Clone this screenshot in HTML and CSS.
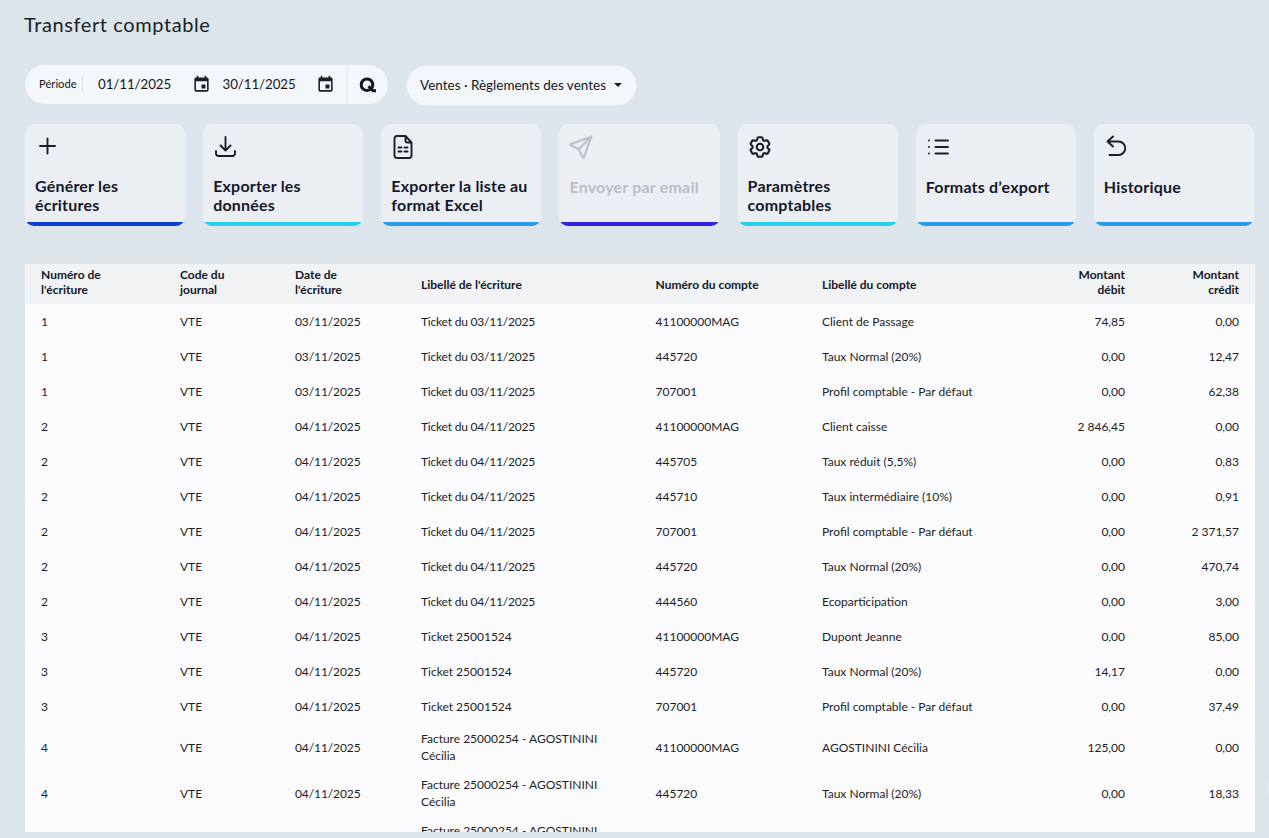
FILE: index.html
```html
<!DOCTYPE html>
<html lang="fr">
<head>
<meta charset="utf-8">
<title>Transfert comptable</title>
<link rel="stylesheet" href="styles.css">
</head>
<body>
<main class="page">
  <h1 class="title">Transfert comptable</h1>
  <div class="filters">
    <div class="period">
      <span class="period-label">Période</span>
      <span class="date"><span class="date-text">01/11/2025</span>
        <svg class="cal" viewBox="0 0 24 24"><path d="M17 12h-5v5h5v-5zM16 1v2H8V1H6v2H5c-1.11 0-1.99.9-1.99 2L3 19c0 1.1.89 2 2 2h14c1.1 0 2-.9 2-2V5c0-1.1-.9-2-2-2h-1V1h-2zm3 18H5V8h14v11z"/></svg></span>
      <span class="date"><span class="date-text">30/11/2025</span>
        <svg class="cal" viewBox="0 0 24 24"><path d="M17 12h-5v5h5v-5zM16 1v2H8V1H6v2H5c-1.11 0-1.99.9-1.99 2L3 19c0 1.1.89 2 2 2h14c1.1 0 2-.9 2-2V5c0-1.1-.9-2-2-2h-1V1h-2zm3 18H5V8h14v11z"/></svg></span>
      <span class="search"><svg viewBox="0 0 18 18"><circle cx="8" cy="8.700" r="5.800"/><path d="M9.500 10.200 14 14.800h3"/></svg></span>
    </div>
    <div class="select"><span>Ventes · Règlements des ventes</span><i class="caret"></i></div>
  </div>

  <div class="actions">
    <div class="card c-blue">
      <svg class="ico" viewBox="0 0 24 24"><path d="M12.500 3.500v15M5 11h15"/></svg>
      <div class="label">Générer les écritures</div>
    </div>
    <div class="card c-cyan">
      <svg class="ico" viewBox="0 0 24 24"><path d="M3 16v2.500A2.500 2.500 0 0 0 5.500 21h14a2.500 2.500 0 0 0 2.500-2.500V16M17.500 10.500l-5 5-5-5M12.500 15.500V2"/></svg>
      <div class="label">Exporter les données</div>
    </div>
    <div class="card c-sky">
      <svg class="ico" viewBox="0 0 24 24"><path d="M14.500 1.500v4a2 2 0 0 0 2 2h4M18 23H6a2.500 2.500 0 0 1-2.500-2.500v-17A2.500 2.500 0 0 1 6 1h8.500l6 6.500v13A2.500 2.500 0 0 1 18 23zM7.500 12.500h3M13.500 12.500h3M7.500 16.500h3M13.500 16.500h3"/></svg>
      <div class="label">Exporter la liste au format Excel</div>
    </div>
    <div class="card c-indigo disabled">
      <svg class="ico" viewBox="1.500 1.500 21 21"><path d="M10 14 21 3M21 3l-6.500 18a.55.55 0 0 1-1 0l-3.500-7-7-3.500a.55.55 0 0 1 0-1L21 3"/></svg>
      <div class="label single">Envoyer par email</div>
    </div>
    <div class="card c-cyan">
      <svg class="ico" viewBox="1 1 22 22"><path d="M9.594 3.94c.09-.542.56-.94 1.11-.94h2.593c.55 0 1.02.398 1.11.94l.213 1.281c.063.374.313.686.645.87.074.04.147.083.22.127.325.196.72.257 1.075.124l1.217-.456a1.125 1.125 0 0 1 1.37.49l1.296 2.247a1.125 1.125 0 0 1-.26 1.431l-1.003.827c-.293.241-.438.613-.43.992a7.723 7.723 0 0 1 0 .255c-.008.378.137.75.43.991l1.004.827c.424.35.534.955.26 1.43l-1.298 2.247a1.125 1.125 0 0 1-1.369.491l-1.217-.456c-.355-.133-.75-.072-1.076.124a6.47 6.47 0 0 1-.22.128c-.331.183-.581.495-.644.869l-.213 1.281c-.09.543-.56.94-1.11.94h-2.594c-.55 0-1.019-.398-1.11-.94l-.213-1.281c-.062-.374-.312-.686-.644-.87a6.52 6.52 0 0 1-.22-.127c-.325-.196-.72-.257-1.076-.124l-1.217.456a1.125 1.125 0 0 1-1.369-.49l-1.297-2.247a1.125 1.125 0 0 1 .26-1.431l1.004-.827c.292-.24.437-.613.43-.991a6.932 6.932 0 0 1 0-.255c.007-.38-.138-.751-.43-.992l-1.004-.827a1.125 1.125 0 0 1-.26-1.43l1.297-2.247a1.125 1.125 0 0 1 1.37-.491l1.216.456c.356.133.751.072 1.076-.124.072-.044.146-.086.22-.128.332-.183.582-.495.644-.869l.214-1.28Z"/><path d="M15 12a3 3 0 1 1-6 0 3 3 0 0 1 6 0Z"/></svg>
      <div class="label">Paramètres comptables</div>
    </div>
    <div class="card c-sky">
      <svg class="ico" viewBox="0 0 24 24"><path d="M9.500 5.500h12.500M9.500 12h12.500M9.500 18.500h12.500M3 5.500h.01M3 12h.01M3 18.500h.01"/></svg>
      <div class="label single">Formats d’export</div>
    </div>
    <div class="card c-sky">
      <svg class="ico" viewBox="0 0 24 24"><path d="M9 1.500 3.500 6.500 9 11.500M3.500 6.500h11a6.750 6.750 0 0 1 0 13.500H5.500"/></svg>
      <div class="label single">Historique</div>
    </div>
  </div>

  <div class="table-wrap">
    <table class="grid">
      <colgroup>
        <col class="w1"><col class="w2"><col class="w3"><col class="w4"><col class="w5"><col class="w6"><col class="w7"><col class="w8">
      </colgroup>
      <thead>
        <tr>
          <th class="two">Numéro de<br>l'écriture</th><th class="two">Code du<br>journal</th><th class="two">Date de<br>l'écriture</th><th>Libellé de l'écriture</th><th>Numéro du compte</th><th>Libellé du compte</th><th class="num two">Montant<br>débit</th><th class="num two">Montant<br>crédit</th>
        </tr>
      </thead>
      <tbody>
        <tr><td>1</td><td>VTE</td><td class="dt">03/11/2025</td><td class="tk">Ticket du 03/11/2025</td><td>41100000MAG</td><td>Client de Passage</td><td class="num">74,85</td><td class="num">0,00</td></tr>
        <tr><td>1</td><td>VTE</td><td class="dt">03/11/2025</td><td class="tk">Ticket du 03/11/2025</td><td>445720</td><td>Taux Normal (20%)</td><td class="num">0,00</td><td class="num">12,47</td></tr>
        <tr><td>1</td><td>VTE</td><td class="dt">03/11/2025</td><td class="tk">Ticket du 03/11/2025</td><td>707001</td><td>Profil comptable - Par défaut</td><td class="num">0,00</td><td class="num">62,38</td></tr>
        <tr><td>2</td><td>VTE</td><td class="dt">04/11/2025</td><td class="tk">Ticket du 04/11/2025</td><td>41100000MAG</td><td>Client caisse</td><td class="num">2 846,45</td><td class="num">0,00</td></tr>
        <tr><td>2</td><td>VTE</td><td class="dt">04/11/2025</td><td class="tk">Ticket du 04/11/2025</td><td>445705</td><td>Taux réduit (5,5%)</td><td class="num">0,00</td><td class="num">0,83</td></tr>
        <tr><td>2</td><td>VTE</td><td class="dt">04/11/2025</td><td class="tk">Ticket du 04/11/2025</td><td>445710</td><td>Taux intermédiaire (10%)</td><td class="num">0,00</td><td class="num">0,91</td></tr>
        <tr><td>2</td><td>VTE</td><td class="dt">04/11/2025</td><td class="tk">Ticket du 04/11/2025</td><td>707001</td><td>Profil comptable - Par défaut</td><td class="num">0,00</td><td class="num">2 371,57</td></tr>
        <tr><td>2</td><td>VTE</td><td class="dt">04/11/2025</td><td class="tk">Ticket du 04/11/2025</td><td>445720</td><td>Taux Normal (20%)</td><td class="num">0,00</td><td class="num">470,74</td></tr>
        <tr><td>2</td><td>VTE</td><td class="dt">04/11/2025</td><td class="tk">Ticket du 04/11/2025</td><td>444560</td><td>Ecoparticipation</td><td class="num">0,00</td><td class="num">3,00</td></tr>
        <tr><td>3</td><td>VTE</td><td class="dt">04/11/2025</td><td>Ticket 25001524</td><td>41100000MAG</td><td>Dupont Jeanne</td><td class="num">0,00</td><td class="num">85,00</td></tr>
        <tr><td>3</td><td>VTE</td><td class="dt">04/11/2025</td><td>Ticket 25001524</td><td>445720</td><td>Taux Normal (20%)</td><td class="num">14,17</td><td class="num">0,00</td></tr>
        <tr><td>3</td><td>VTE</td><td class="dt">04/11/2025</td><td>Ticket 25001524</td><td>707001</td><td>Profil comptable - Par défaut</td><td class="num">0,00</td><td class="num">37,49</td></tr>
        <tr class="dbl"><td>4</td><td>VTE</td><td class="dt">04/11/2025</td><td class="wrap">Facture 25000254 - AGOSTININI Cécilia</td><td>41100000MAG</td><td>AGOSTININI Cécilia</td><td class="num">125,00</td><td class="num">0,00</td></tr>
        <tr class="dbl"><td>4</td><td>VTE</td><td class="dt">04/11/2025</td><td class="wrap">Facture 25000254 - AGOSTININI Cécilia</td><td>445720</td><td>Taux Normal (20%)</td><td class="num">0,00</td><td class="num">18,33</td></tr>
        <tr class="dbl"><td>4</td><td>VTE</td><td class="dt">04/11/2025</td><td class="wrap">Facture 25000254 - AGOSTININI Cécilia</td><td>707001</td><td>Profil comptable - Par défaut</td><td class="num">0,00</td><td class="num">106,67</td></tr>
      </tbody>
    </table>
  </div>
  <div class="peek"></div>
</main>
</body>
</html>
```
FILE: styles.css
```css
* { box-sizing: border-box; }
html, body { margin: 0; height: 100%; overflow: hidden; }
body { background: #dce4ec; color: #14171f; font-family: Lato, "Liberation Sans", sans-serif; }

.page { position: relative; height: 838px; display: flex; flex-direction: column; padding: 12px 15px 6px 25px; overflow: hidden; }

.title { margin: 0 0 0 -1px; font-size: 20px; font-weight: 400; line-height: 24px; letter-spacing: .6px; color: #1b1e26; }

.filters { display: flex; align-items: flex-start; gap: 18px; margin-top: 29px; }

.period { display: flex; align-items: center; width: 363px; height: 39px; padding: 0 0 1px 14px; background: #f3f6fa; border-radius: 20px; }
.period-label { font-size: 11.2px; line-height: 16px; padding-right: 5px; border-right: 1px solid #dfe3e8; width: 44px; }
.date { display: flex; align-items: center; justify-content: space-between; font-size: 13.33px; }
.date:nth-child(2) { width: 112.500px; margin-left: 15px; }
.date:nth-child(3) { width: 112.500px; margin-left: 12px; }
.date-text { letter-spacing: -.08px; }
.cal { width: 19px; height: 19px; fill: #1b1e26; }
.search { margin-left: auto; width: 41px; height: 39px; margin-bottom: -1px; border-left: 1px solid #e0e4e9; display: flex; align-items: center; justify-content: center; }
.search svg { width: 18px; height: 18px; fill: none; stroke: #14171f; stroke-width: 3; }

.select { display: flex; align-items: center; width: 231px; height: 41px; padding: 0 0 1px 13px; background: #f3f6fa; border: 1px solid #e6ebf0; border-radius: 21px; font-size: 13.500px; }
.caret { margin-left: 8px; width: 0; height: 0; border: 4px solid transparent; border-top-color: #1b1e26; border-bottom: 0; }

.actions { display: flex; gap: 18px; margin-top: 18px; }
.card { flex: 1 1 0; height: 102px; border-radius: 9px; padding: 11px 10px 0; background: linear-gradient(#ebeff4 98px, var(--bar) 98px); }
.c-blue { --bar: #0a3fd6; }
.c-cyan { --bar: #26d0e8; }
.c-sky { --bar: #2b9ae8; }
.c-indigo { --bar: #2f22e0; }
.ico { display: block; width: 24px; height: 24px; fill: none; stroke: #1a1d2b; stroke-width: 1.900; stroke-linecap: round; stroke-linejoin: round; }
.label { margin-top: 17px; font-size: 16px; font-weight: 700; line-height: 19px; letter-spacing: .2px; color: #14172a; }
.single { padding-top: 1px; }
.disabled .ico { stroke: #bcc0ca; }
.disabled .label { color: #b9bdc7; }

.table-wrap { flex: 1; min-height: 0; overflow: hidden; margin: 38px -1px 0 0; background: #fbfbfe; }
.grid { width: 1230px; table-layout: fixed; border-collapse: collapse; font-size: 12px; line-height: 17.5px; }
.w1 { width: 139px; } .w2 { width: 115px; } .w3 { width: 126px; } .w4 { width: 234.500px; }
.w5 { width: 166.500px; } .w6 { width: 234px; } .w7 { width: 101px; } .w8 { width: 114px; }
th { height: 40px; padding: 3px 16px; background: #f0f2f4; text-align: left; font-weight: 700; line-height: 15px; color: #14172a; }
th.two { padding-top: 2.500px; padding-bottom: 7.500px; }
td { height: 35px; padding: 5.500px 16px; color: #1b1e26; }
.dbl td { padding-top: 6.500px; padding-bottom: 4.500px; }
.dbl td.wrap { padding-top: 5.500px; padding-bottom: 5.500px; }
.dt { letter-spacing: -.1px; }
.tk { letter-spacing: -.2px; }
.num { text-align: right; }

.peek { position: absolute; left: 1266px; top: 768px; width: 40px; height: 40px; border-radius: 50%; background: #e1e7ee; filter: blur(2px); }
```
